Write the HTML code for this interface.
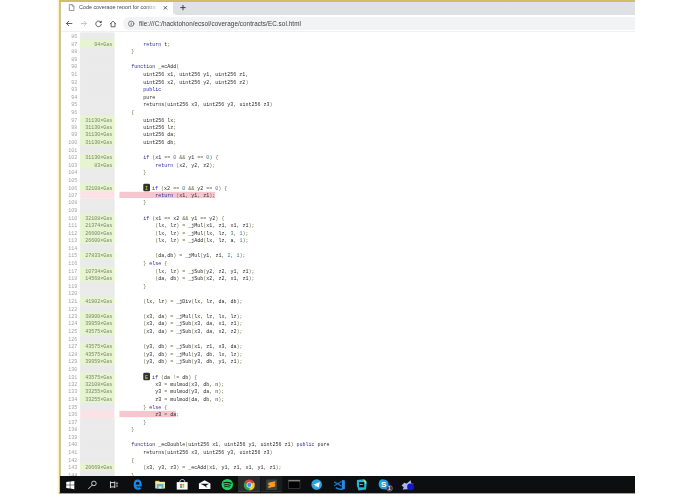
<!DOCTYPE html>
<html lang="en">
<head>
<meta charset="utf-8">
<title>Code coverage report for contracts/EC.sol</title>
<style>
html,body{margin:0;padding:0;background:#fff;}
body{width:695px;height:494px;overflow:hidden;position:relative;font-family:"Liberation Sans",sans-serif;}
#win{position:absolute;left:0;top:0;width:695px;height:494px;overflow:hidden;}
.abs{position:absolute;}
/* capture frame */
#fl1{left:57px;top:0;width:1px;height:494px;background:#fffce4;}
#fl2{left:58px;top:0;width:1px;height:494px;background:#fcf4bc;}
#fl3{left:59px;top:0;width:1px;height:494px;background:#d0c283;}
#fl4{left:60px;top:0;width:1px;height:494px;background:#cfc59c;}
#ft{left:59px;top:0;width:576px;height:1.55px;background:#cebf66;}
#fb{left:59px;top:492.4px;width:576px;height:1.6px;background:#b5ab4c;}
/* chrome */
#tabstrip{left:61px;top:1.55px;width:574px;height:13.25px;background:linear-gradient(#dde2ec,#dfe1e5 30%,#dee0e4);}
#tab{left:61px;top:1.55px;width:111.6px;height:13.45px;background:#fff;}
#tabc{left:172.6px;top:11.2px;width:3.6px;height:3.6px;background:radial-gradient(circle at 100% 0,#dee1e6 3.4px,#fff 3.8px);}
#toolbar{left:61px;top:14.8px;width:574px;height:17.2px;background:#fff;border-bottom:0.5px solid #f0f0f0;box-sizing:border-box;}
#omni{left:122.5px;top:17.2px;width:512.5px;border-top-right-radius:0 !important;border-bottom-right-radius:0 !important;height:12.6px;border-radius:6.3px;background:#f1f3f4;}
.t{position:absolute;transform:scale(.45);transform-origin:0 0;white-space:nowrap;line-height:1;}
/* page */
#page{position:absolute;left:61px;top:32px;width:574px;height:444px;overflow:hidden;background:#fff;}
#pg{position:absolute;left:-1.3px;top:0;width:1280px;transform:scale(.45);transform-origin:0 0;color:#333;}
pre{font:11.14px/16.8px "Liberation Mono",monospace;margin:0;padding:0;}
table.coverage{border-collapse:collapse;margin:0.9px 0 0 0;padding:0;}
table.coverage td{margin:0;padding:0;vertical-align:top;}
td.lc{text-align:right;padding:0 5px 0 20px !important;color:rgba(0,0,0,.4);}
td.lg{text-align:right;padding-right:10.5px !important;color:rgba(0,0,0,.5);position:relative;}
td.lg pre.fg{position:absolute;left:0;top:2px;width:76px;box-sizing:border-box;padding:0 5px;}
td.lc pre{position:relative;top:2px;left:-1.6px;}
td.tx pre{position:relative;top:2px;left:0;}
td.lg .cl{display:inline-block;box-sizing:border-box;padding:0 5px;width:76px;}
.neu{background:#eaeaea;box-shadow:0 1px 0 #eaeaea;}
.yes{background:rgb(230,245,208);box-shadow:0 1px 0 rgb(230,245,208);}
.no{background:#fce1e5;}
td.tx{color:#282828;}
.cno{background:linear-gradient(#f6c6ce,#f6c6ce) no-repeat;background-size:100% 14.06px;padding:2.6px 0 0 0;}
.kwd{color:#2b2b9c;}
.pun{color:#70704a;}
.lit{color:#3c7c86;}
.mib b{font-weight:normal;position:relative;top:1.8px;}
.mib{position:relative;top:-1.8px;display:inline-block;margin-right:5px;border-radius:3px;padding:0 4px;background:#333;color:#e0e028;}
/* taskbar */
#taskbar{left:60.2px;top:476px;width:574.8px;height:16.5px;background:#0c0e10;}
</style>
</head>
<body>
<div id="win">
<div class="abs" id="fl1"></div><div class="abs" id="fl2"></div><div class="abs" id="fl3"></div><div class="abs" id="fl4"></div>
<div class="abs" id="ft"></div><div class="abs" id="fb"></div>
<div class="abs" id="tabstrip"></div>
<div class="abs" id="tab"></div><div class="abs" id="tabc"></div>
<div class="abs" id="toolbar"></div>
<div class="abs" id="omni"></div>
<div class="t" style="left:79px;top:4.2px;font-size:12px;color:#45484c;width:175px;overflow:hidden;-webkit-mask-image:linear-gradient(90deg,#000 85%,transparent 100%);mask-image:linear-gradient(90deg,#000 85%,transparent 100%);">Code coverage report for contracts/EC.sol</div>
<div class="t" style="left:138.8px;top:20.9px;font-size:14px;letter-spacing:0.17px;color:#3a3c40;">file:///C:/hacktohon/ecsol/coverage/contracts/EC.sol.html</div>
<svg class="abs" style="left:61px;top:2px" width="574" height="30" viewBox="0 0 574 30" fill="none" stroke-linecap="round" stroke-linejoin="round">
<!-- file icon -->
<path d="M8.700 2.600h2.500l1.700 1.700v4.200H8.700z" stroke="#5f6368" stroke-width="0.65"/>
<path d="M11.200 2.600v1.700h1.700" stroke="#5f6368" stroke-width="0.5"/>
<!-- close -->
<path d="M103 4.4l2.8 2.8m0-2.8l-2.8 2.8" stroke="#3c4043" stroke-width="0.85"/>
<!-- plus -->
<path d="M119.7 5.6h4.6m-2.3-2.3v4.6" stroke="#303336" stroke-width="0.9"/>
<!-- back -->
<path d="M10.9 21.5H5.5m2.2-2.2l-2.200 2.200 2.200 2.200" stroke="#45494d" stroke-width="0.85"/>
<!-- forward -->
<path d="M20.2 21.500h5.300m-2.200-2.200l2.200 2.200-2.200 2.200" stroke="#bdc0c4" stroke-width="0.85"/>
<!-- reload -->
<path d="M39.600 19.900a2.800 2.800 0 1 0 .700 2.600" stroke="#45494d" stroke-width="0.9"/>
<path d="M40.600 18.600v2.400h-2.400z" fill="#3c4043" stroke="none"/>
<!-- home -->
<path d="M49.400 21.800l2.650-2.700 2.650 2.700m-4.600-.500v3.500h3.900v-3.500" stroke="#45494d" stroke-width="0.85"/>
<!-- info -->
<circle cx="70.200" cy="21.750" r="2.700" stroke="#5a5e63" stroke-width="0.75"/>
<path d="M70.200 21.400v1.800" stroke="#5a5e63" stroke-width="0.75"/><circle cx="70.200" cy="20.350" r="0.420" fill="#5a5e63"/>
</svg>
<div id="page"><div id="pg"><table class="coverage"><tr>
<td class="lc"><pre>
86
87
88
89
90
91
92
93
94
95
96
97
98
99
100
101
102
103
104
105
106
107
108
109
110
111
112
113
114
115
116
117
118
119
120
121
122
123
124
125
126
127
128
129
130
131
132
133
134
135
136
137
138
139
140
141
142
143
144
145</pre></td>
<td class="lg"><pre class="bg">
<span class="cl neu"> </span>
<span class="cl yes"> </span>
<span class="cl neu"> </span>
<span class="cl neu"> </span>
<span class="cl neu"> </span>
<span class="cl neu"> </span>
<span class="cl neu"> </span>
<span class="cl neu"> </span>
<span class="cl neu"> </span>
<span class="cl neu"> </span>
<span class="cl neu"> </span>
<span class="cl yes"> </span>
<span class="cl yes"> </span>
<span class="cl yes"> </span>
<span class="cl yes"> </span>
<span class="cl neu"> </span>
<span class="cl yes"> </span>
<span class="cl yes"> </span>
<span class="cl neu"> </span>
<span class="cl neu"> </span>
<span class="cl yes"> </span>
<span class="cl no"> </span>
<span class="cl neu"> </span>
<span class="cl neu"> </span>
<span class="cl yes"> </span>
<span class="cl yes"> </span>
<span class="cl yes"> </span>
<span class="cl yes"> </span>
<span class="cl neu"> </span>
<span class="cl yes"> </span>
<span class="cl neu"> </span>
<span class="cl yes"> </span>
<span class="cl yes"> </span>
<span class="cl neu"> </span>
<span class="cl neu"> </span>
<span class="cl yes"> </span>
<span class="cl neu"> </span>
<span class="cl yes"> </span>
<span class="cl yes"> </span>
<span class="cl yes"> </span>
<span class="cl neu"> </span>
<span class="cl yes"> </span>
<span class="cl yes"> </span>
<span class="cl yes"> </span>
<span class="cl neu"> </span>
<span class="cl yes"> </span>
<span class="cl yes"> </span>
<span class="cl yes"> </span>
<span class="cl yes"> </span>
<span class="cl neu"> </span>
<span class="cl no"> </span>
<span class="cl neu"> </span>
<span class="cl neu"> </span>
<span class="cl neu"> </span>
<span class="cl neu"> </span>
<span class="cl neu"> </span>
<span class="cl neu"> </span>
<span class="cl yes"> </span>
<span class="cl neu"> </span>
<span class="cl neu"> </span></pre><pre class="fg">

94×Gas









31130×Gas
31130×Gas
31130×Gas
31130×Gas

31130×Gas
83×Gas


32108×Gas



32108×Gas
21374×Gas
26600×Gas
26600×Gas

27833×Gas

10734×Gas
14568×Gas


41902×Gas

38900×Gas
39959×Gas
43575×Gas

43575×Gas
43575×Gas
39959×Gas

43575×Gas
32108×Gas
33255×Gas
33255×Gas








20669×Gas

</pre></td>
<td class="tx"><pre>

        <span class="kwd">return</span> t<span class="pun">;</span>
    <span class="pun">}</span>

    <span class="kwd">function</span> _ecAdd<span class="pun">(</span>
        uint256 x1<span class="pun">,</span> uint256 y1<span class="pun">,</span> uint256 z1<span class="pun">,</span>
        uint256 x2<span class="pun">,</span> uint256 y2<span class="pun">,</span> uint256 z2<span class="pun">)</span>
        <span class="kwd">public</span>
        pure
        returns<span class="pun">(</span>uint256 x3<span class="pun">,</span> uint256 y3<span class="pun">,</span> uint256 z3<span class="pun">)</span>
    <span class="pun">{</span>
        uint256 lx<span class="pun">;</span>
        uint256 lz<span class="pun">;</span>
        uint256 da<span class="pun">;</span>
        uint256 db<span class="pun">;</span>

        <span class="kwd">if</span> <span class="pun">(</span>x1 <span class="pun">==</span> <span class="lit">0</span> <span class="pun">&amp;&amp;</span> y1 <span class="pun">==</span> <span class="lit">0</span><span class="pun">)</span> <span class="pun">{</span>
            <span class="kwd">return</span> <span class="pun">(</span>x2<span class="pun">,</span> y2<span class="pun">,</span> z2<span class="pun">);</span>
        <span class="pun">}</span>

        <span class="mib"><b>I</b></span><span class="kwd">if</span> <span class="pun">(</span>x2 <span class="pun">==</span> <span class="lit">0</span> <span class="pun">&amp;&amp;</span> y2 <span class="pun">==</span> <span class="lit">0</span><span class="pun">)</span> <span class="pun">{</span>
<span class="cno">            <span class="kwd">return</span> <span class="pun">(</span>x1<span class="pun">,</span> y1<span class="pun">,</span> z1<span class="pun">);</span></span>
        <span class="pun">}</span>

        <span class="kwd">if</span> <span class="pun">(</span>x1 <span class="pun">==</span> x2 <span class="pun">&amp;&amp;</span> y1 <span class="pun">==</span> y2<span class="pun">)</span> <span class="pun">{</span>
            <span class="pun">(</span>lx<span class="pun">,</span> lz<span class="pun">)</span> <span class="pun">=</span> _jMul<span class="pun">(</span>x1<span class="pun">,</span> z1<span class="pun">,</span> x1<span class="pun">,</span> z1<span class="pun">);</span>
            <span class="pun">(</span>lx<span class="pun">,</span> lz<span class="pun">)</span> <span class="pun">=</span> _jMul<span class="pun">(</span>lx<span class="pun">,</span> lz<span class="pun">,</span> <span class="lit">3</span><span class="pun">,</span> <span class="lit">1</span><span class="pun">);</span>
            <span class="pun">(</span>lx<span class="pun">,</span> lz<span class="pun">)</span> <span class="pun">=</span> _jAdd<span class="pun">(</span>lx<span class="pun">,</span> lz<span class="pun">,</span> a<span class="pun">,</span> <span class="lit">1</span><span class="pun">);</span>

            <span class="pun">(</span>da<span class="pun">,</span>db<span class="pun">)</span> <span class="pun">=</span> _jMul<span class="pun">(</span>y1<span class="pun">,</span> z1<span class="pun">,</span> <span class="lit">2</span><span class="pun">,</span> <span class="lit">1</span><span class="pun">);</span>
        <span class="pun">}</span> <span class="kwd">else</span> <span class="pun">{</span>
            <span class="pun">(</span>lx<span class="pun">,</span> lz<span class="pun">)</span> <span class="pun">=</span> _jSub<span class="pun">(</span>y2<span class="pun">,</span> z2<span class="pun">,</span> y1<span class="pun">,</span> z1<span class="pun">);</span>
            <span class="pun">(</span>da<span class="pun">,</span> db<span class="pun">)</span> <span class="pun">=</span> _jSub<span class="pun">(</span>x2<span class="pun">,</span> z2<span class="pun">,</span> x1<span class="pun">,</span> z1<span class="pun">);</span>
        <span class="pun">}</span>

        <span class="pun">(</span>lx<span class="pun">,</span> lz<span class="pun">)</span> <span class="pun">=</span> _jDiv<span class="pun">(</span>lx<span class="pun">,</span> lz<span class="pun">,</span> da<span class="pun">,</span> db<span class="pun">);</span>

        <span class="pun">(</span>x3<span class="pun">,</span> da<span class="pun">)</span> <span class="pun">=</span> _jMul<span class="pun">(</span>lx<span class="pun">,</span> lz<span class="pun">,</span> lx<span class="pun">,</span> lz<span class="pun">);</span>
        <span class="pun">(</span>x3<span class="pun">,</span> da<span class="pun">)</span> <span class="pun">=</span> _jSub<span class="pun">(</span>x3<span class="pun">,</span> da<span class="pun">,</span> x1<span class="pun">,</span> z1<span class="pun">);</span>
        <span class="pun">(</span>x3<span class="pun">,</span> da<span class="pun">)</span> <span class="pun">=</span> _jSub<span class="pun">(</span>x3<span class="pun">,</span> da<span class="pun">,</span> x2<span class="pun">,</span> z2<span class="pun">);</span>

        <span class="pun">(</span>y3<span class="pun">,</span> db<span class="pun">)</span> <span class="pun">=</span> _jSub<span class="pun">(</span>x1<span class="pun">,</span> z1<span class="pun">,</span> x3<span class="pun">,</span> da<span class="pun">);</span>
        <span class="pun">(</span>y3<span class="pun">,</span> db<span class="pun">)</span> <span class="pun">=</span> _jMul<span class="pun">(</span>y3<span class="pun">,</span> db<span class="pun">,</span> lx<span class="pun">,</span> lz<span class="pun">);</span>
        <span class="pun">(</span>y3<span class="pun">,</span> db<span class="pun">)</span> <span class="pun">=</span> _jSub<span class="pun">(</span>y3<span class="pun">,</span> db<span class="pun">,</span> y1<span class="pun">,</span> z1<span class="pun">);</span>

        <span class="mib"><b>E</b></span><span class="kwd">if</span> <span class="pun">(</span>da <span class="pun">!=</span> db<span class="pun">)</span> <span class="pun">{</span>
            x3 <span class="pun">=</span> mulmod<span class="pun">(</span>x3<span class="pun">,</span> db<span class="pun">,</span> n<span class="pun">);</span>
            y3 <span class="pun">=</span> mulmod<span class="pun">(</span>y3<span class="pun">,</span> da<span class="pun">,</span> n<span class="pun">);</span>
            z3 <span class="pun">=</span> mulmod<span class="pun">(</span>da<span class="pun">,</span> db<span class="pun">,</span> n<span class="pun">);</span>
        <span class="pun">}</span> <span class="kwd">else</span> <span class="pun">{</span>
<span class="cno">            z3 <span class="pun">=</span> da</span><span class="pun">;</span>
        <span class="pun">}</span>
    <span class="pun">}</span>

    <span class="kwd">function</span> _ecDouble<span class="pun">(</span>uint256 x1<span class="pun">,</span> uint256 y1<span class="pun">,</span> uint256 z1<span class="pun">)</span> <span class="kwd">public</span> pure
        returns<span class="pun">(</span>uint256 x3<span class="pun">,</span> uint256 y3<span class="pun">,</span> uint256 z3<span class="pun">)</span>
    <span class="pun">{</span>
        <span class="pun">(</span>x3<span class="pun">,</span> y3<span class="pun">,</span> z3<span class="pun">)</span> <span class="pun">=</span> _ecAdd<span class="pun">(</span>x1<span class="pun">,</span> y1<span class="pun">,</span> z1<span class="pun">,</span> x1<span class="pun">,</span> y1<span class="pun">,</span> z1<span class="pun">);</span>
    <span class="pun">}</span>
</pre></td>
</tr></table></div></div>
<div class="abs" id="taskbar"></div>
<svg class="abs" style="left:60px;top:476px" width="575" height="16.2" viewBox="0 0 575 16.2">
<!-- active app backgrounds -->
<rect x="178" y="0" width="22" height="16.2" fill="#2a2c2e"/>
<rect x="178" y="15.3" width="22" height="0.9" fill="#474d54"/>
<rect x="200.3" y="0" width="22" height="16.2" fill="#1a1c1e"/>
<rect x="201.2" y="15.3" width="20.2" height="0.9" fill="#33383d"/>
<!-- windows -->
<g fill="#fff">
<path d="M6 6.1l3.6-.5v3.2H6zM10.1 5.5l4-.6v3.9h-4zM6 9.3h3.6v3.2L6 12zM10.1 9.3h4v3.9l-4-.6z"/>
</g>
<!-- search -->
<circle cx="33.7" cy="7.4" r="2.3" fill="none" stroke="#f2f2f2" stroke-width="0.8"/>
<path d="M32.1 9l-3.7 3.7" stroke="#f2f2f2" stroke-width="0.85" stroke-linecap="round"/>
<!-- task view -->
<path d="M50.3 5.4v6.7M54.6 5.4v6.7M50.3 6.6h4.3M50.3 10.9h4.3" stroke="#e8e8e8" stroke-width="0.9" fill="none"/>
<rect x="55.7" y="6.4" width="2.1" height="2" fill="#8a8a8a"/>
<rect x="55.7" y="9.1" width="2.1" height="2" fill="#6a6a6a"/>
<!-- edge -->
<path d="M75.200 9.500h5.300c0-2.900-1.200-4.800-3-4.800-1.900 0-2.900 2-2.900 4 0 2.300 1.300 3.900 3.300 3.900 1 0 1.900-.3 2.500-.8" fill="none" stroke="#1b87e6" stroke-width="2.2"/>
<!-- explorer -->
<rect x="95.100" y="4.800" width="4.200" height="1.800" fill="#efc64e"/>
<rect x="95.100" y="5.800" width="9.700" height="6.700" fill="#fbe9a4"/>
<rect x="96.600" y="7.900" width="6.700" height="4.600" fill="#5db7c9"/>
<rect x="98.400" y="10.300" width="3.100" height="2.200" fill="#cfe9e2"/>
<!-- store -->
<path d="M119.6 6.200c0-3.600 5.200-3.600 5.200 0" fill="none" stroke="#f4f4f4" stroke-width="0.8"/>
<rect x="116.600" y="6.100" width="10.900" height="7.500" fill="#fdfdfd"/>
<rect x="120" y="7.900" width="1.800" height="1.800" fill="#f04e1f"/>
<rect x="122.300" y="7.900" width="1.800" height="1.800" fill="#7fba00"/>
<rect x="120" y="10.100" width="1.800" height="1.800" fill="#00a4ef"/>
<rect x="122.300" y="10.100" width="1.800" height="1.800" fill="#ffb900"/>
<!-- mail -->
<path d="M138.800 7.400l5.700-3.200 5.800 3.200v5.700h-11.500z" fill="#fbfbfb"/>
<path d="M140.300 7.700h8.500l-3 2.100 1.700 2.300-3.700-2.500z" fill="#0c0e10"/>
<!-- spotify -->
<circle cx="167.200" cy="8.600" r="5.700" fill="#1ed45e"/>
<g fill="none" stroke="#0c140e" stroke-linecap="round">
<path d="M163.700 6.800q3.800-1.200 7.300.5" stroke-width="1.200"/>
<path d="M164.100 8.900q3.200-1 6.100.4" stroke-width="1"/>
<path d="M164.500 10.700q2.600-.8 4.900.3" stroke-width="0.800"/>
</g>
<!-- chrome -->
<g>
<path d="M189.200 8.900L184.440 6.150A5.500 5.500 0 0 1 193.960 6.150Z" fill="#e0443a"/>
<path d="M189.200 8.900L193.960 6.150A5.500 5.500 0 0 1 189.200 14.400Z" fill="#f7c92e"/>
<path d="M189.200 8.900L189.200 14.400A5.500 5.500 0 0 1 184.440 6.150Z" fill="#2fa350"/>
<path d="M189.200 6.400h5.000" stroke="#f7c92e" stroke-width="0"/>
<circle cx="189.200" cy="8.900" r="2.700" fill="#f3f3f3"/>
<circle cx="189.200" cy="8.900" r="2.050" fill="#4a8af0"/>
</g>
<!-- sublime -->
<rect x="206.200" y="3.600" width="10.800" height="10.400" rx="0.800" fill="#3d4043"/>
<path d="M208.30 6.80L215.20 5.30L215.20 7.50L208.30 9.00ZM208.30 6.80L215.20 8.30L215.20 10.50L208.30 9.00ZM215.20 8.30L215.20 10.50L208.30 12.10L208.30 9.90Z" fill="#ff9a12"/>
<!-- terminal -->
<rect x="228.500" y="4.100" width="11.400" height="8.500" fill="#030303" stroke="#4d4d4d" stroke-width="0.600"/>
<rect x="228.500" y="4.100" width="11.400" height="1.300" fill="#8a8a8a"/>
<!-- telegram -->
<circle cx="256.600" cy="8.600" r="5.300" fill="#2ea2da"/>
<path d="M253.300 8.700l6.500-2.700-1.100 5.700-2.100-1.600-1 1.100-.2-2z" fill="#fff"/>
<!-- vscode -->
<path d="M281.900 3.700l3 .900v8.300l-3 .900z" fill="#2a8ae0"/>
<path d="M274.200 5.900l7.400 4.200M274.200 9.700l7.400-4.200" fill="none" stroke="#1d6fc0" stroke-width="1.300"/>
<path d="M275.800 11.700q3.200 2.200 6.600 1.500" fill="none" stroke="#2484da" stroke-width="1.500"/>
<!-- webstorm -->
<path d="M297 4l7.500-.800 2.300 3.600-.800 6.600-7.500 1-1.700-5.400z" fill="#20b8d8"/>
<path d="M303 3.600l3.400 1.400-.6 3z" fill="#c8e85a"/>
<rect x="299" y="6.100" width="5.200" height="5.200" fill="#0a0a0a"/>
<text x="299.500" y="8.600" font-family="Liberation Sans, sans-serif" font-size="2.200" font-weight="bold" fill="#fff">WS</text>
<!-- skype -->
<path d="M319 6.500a3.200 3.200 0 0 1 4.200-3 5 5 0 0 1 5.400 6.300 3.200 3.200 0 0 1-4.200 3.400 5 5 0 0 1-5.400-6.700z" fill="#1ba3ea"/>
<text x="323.700" y="10.700" text-anchor="middle" font-family="Liberation Sans, sans-serif" font-size="8" font-weight="bold" fill="#fff">S</text>
<circle cx="329.500" cy="12.300" r="3" fill="#383838" stroke="#9a9a9a" stroke-width="0.500"/>
<text x="329.400" y="13.900" text-anchor="middle" font-family="Liberation Sans, sans-serif" font-size="4.600" font-weight="bold" fill="#fff">1</text>
<!-- misc app -->
<path d="M341.600 9.600l2.600-2.800 2.600.800 3.800-3.400.800 3.200 2 .400-1 2.400-4.400 3-5.400.200 1.200-2.200z" fill="#a9b9f0"/>
<ellipse cx="350.700" cy="10.900" rx="3.500" ry="3.300" fill="#1818c0"/>
</svg>
</div>
</body>
</html>
